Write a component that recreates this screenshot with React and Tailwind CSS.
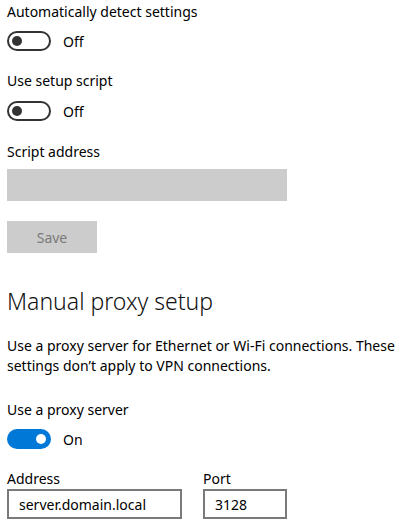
import React from 'react';

function Toggle({ on, label, className }) {
  return (
    <div className={`flex items-center h-5 ${className}`}>
      {on ? (
        <div className="w-[44px] h-[20px] rounded-full bg-[#0078d7] flex items-center justify-end pr-[5px]">
          <div className="w-[10px] h-[10px] rounded-full bg-white" />
        </div>
      ) : (
        <div className="w-[44px] h-[20px] rounded-full border-2 border-[#333] flex items-center pl-[3px]">
          <div className="w-[10px] h-[10px] rounded-full bg-[#333]" />
        </div>
      )}
      <span className="ml-[12px] text-[14px] text-black">{label}</span>
    </div>
  );
}

export default function App() {
  return (
    <div
      className="w-[404px] h-[532px] bg-white px-[7px] overflow-hidden text-black"
      style={{ fontFamily: '"Segoe UI", "Noto Sans", sans-serif' }}
    >
      <div className="pt-[2px] text-[14px] leading-5">Automatically detect settings</div>
      <Toggle on={false} label="Off" className="mt-[9px]" />

      <div className="mt-[20px] text-[14px] leading-5">Use setup script</div>
      <Toggle on={false} label="Off" className="mt-[10px]" />

      <div className="mt-[21px] text-[14px] leading-5">Script address</div>
      <div className="mt-[7px] w-[280px] h-[32px] bg-[#cccccc]" />
      <button className="mt-[20px] w-[90px] h-[32px] bg-[#cccccc] text-[14px] text-[#7a7a7a] flex items-center justify-center">
        Save
      </button>

      <h2 className="mt-[32px] text-[23px] leading-8 font-light text-[#111]">Manual proxy setup</h2>

      <p className="mt-[19px] text-[14px] leading-5">
        Use a proxy server for Ethernet or Wi-Fi connections. These settings don’t apply to VPN connections.
      </p>

      <div className="mt-[24px] text-[14px] leading-5">Use a proxy server</div>
      <Toggle on={true} label="On" className="mt-[9px]" />

      <div className="mt-[20px] flex gap-[21px]">
        <div>
          <div className="text-[14px] leading-5">Address</div>
          <div className="w-[175px] h-[30px] border-2 border-[#7a7a7a] flex items-center pl-[10px] text-[14px]">
            server.domain.local
          </div>
        </div>
        <div>
          <div className="text-[14px] leading-5">Port</div>
          <div className="w-[84px] h-[30px] border-2 border-[#7a7a7a] flex items-center pl-[10px] text-[14px]">
            3128
          </div>
        </div>
      </div>
    </div>
  );
}
